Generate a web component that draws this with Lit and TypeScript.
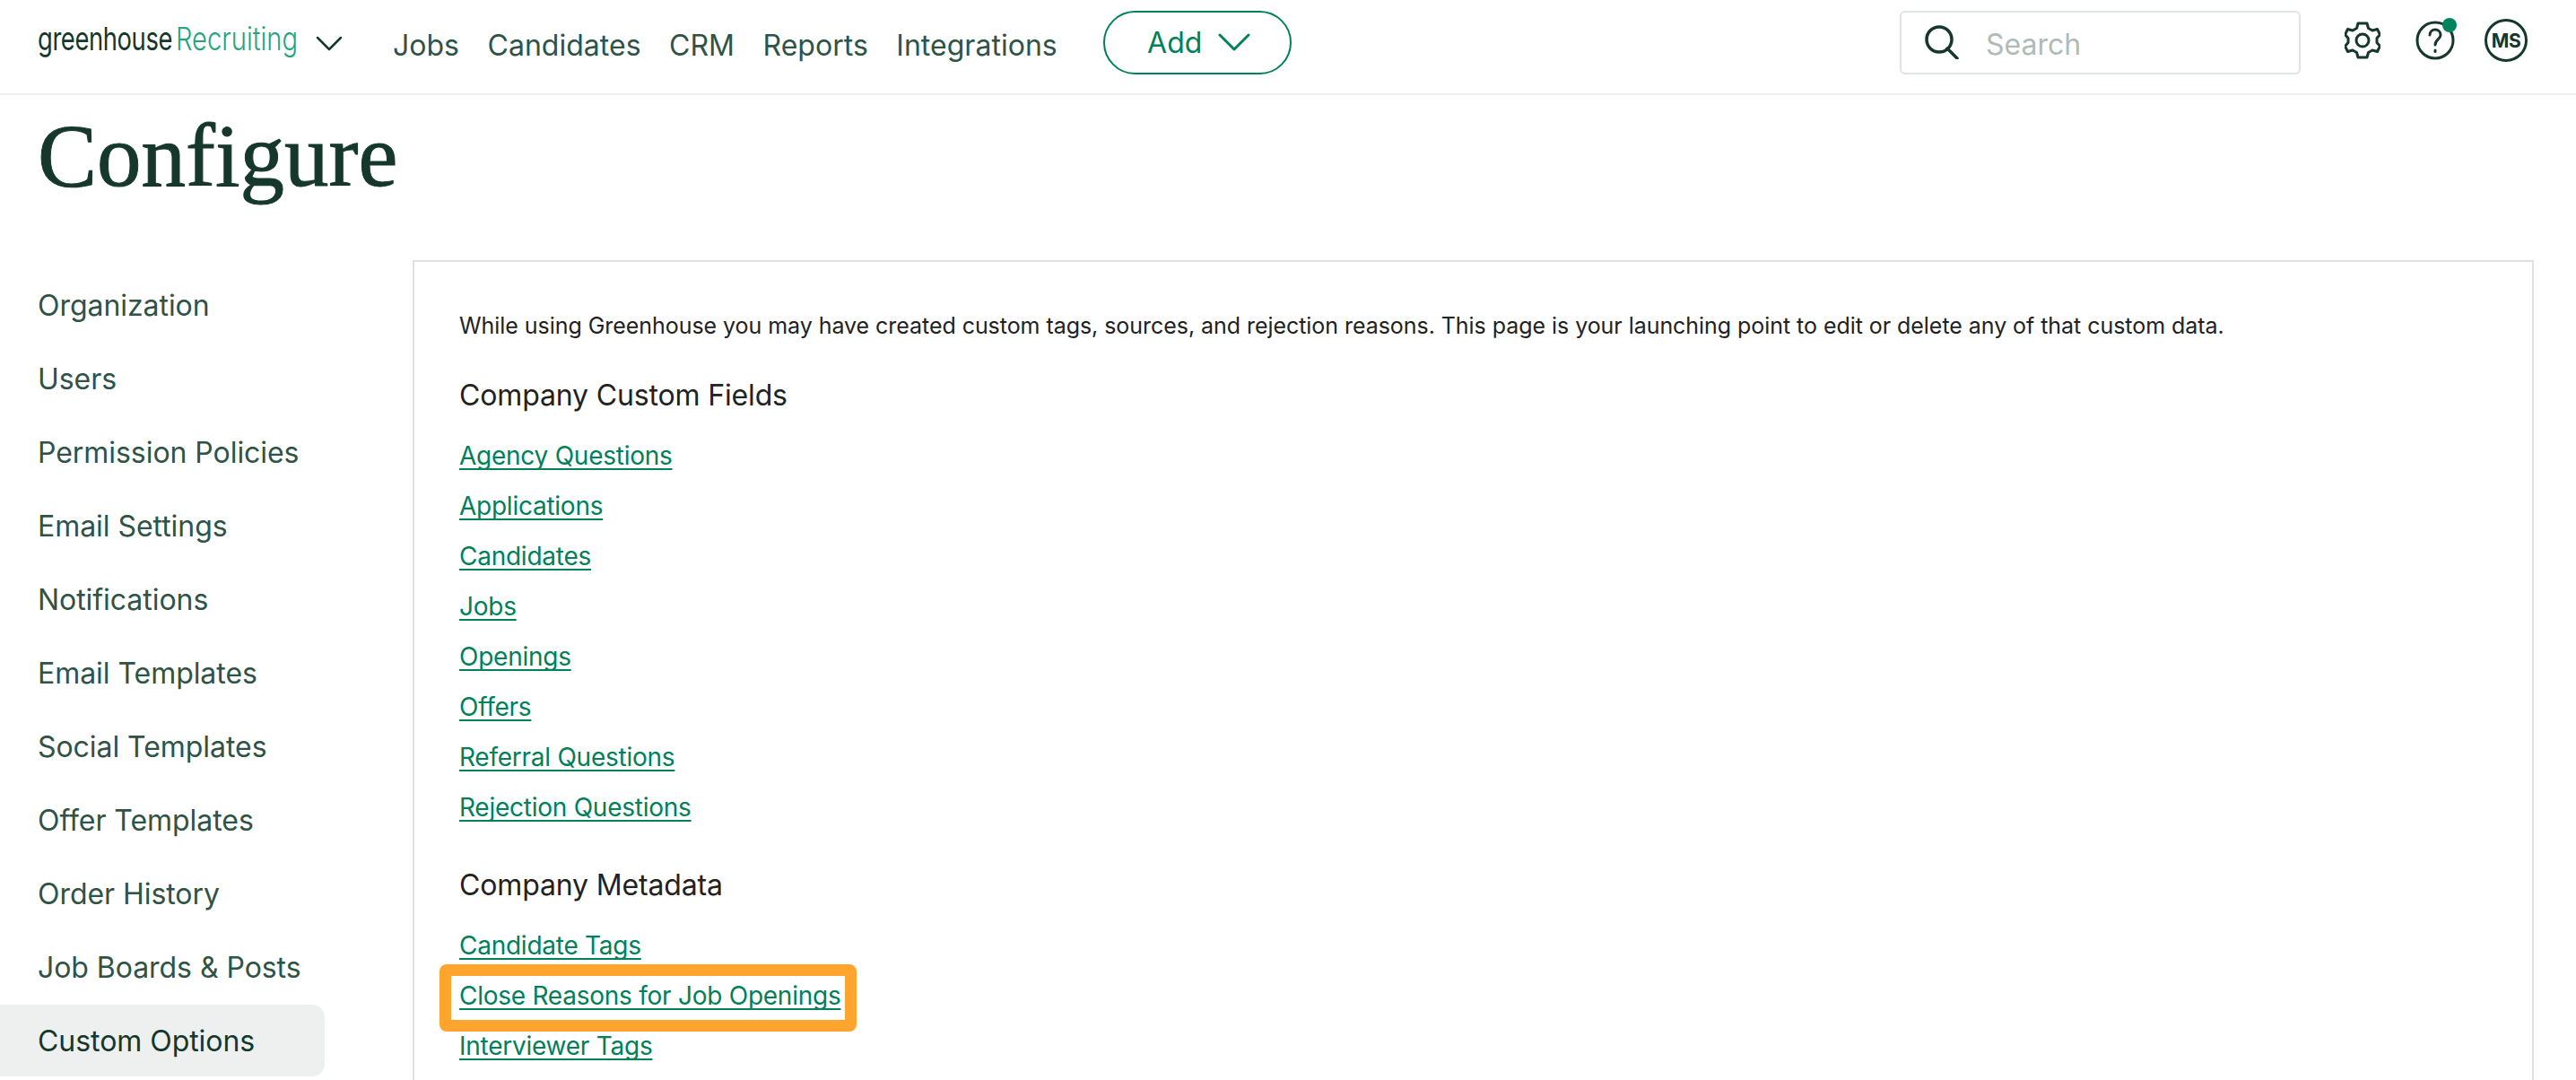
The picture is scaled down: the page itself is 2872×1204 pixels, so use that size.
import { LitElement, html, css } from "lit";
import { customElement } from "lit/decorators.js";

const side = ["Organization","Users","Permission Policies","Email Settings","Notifications","Email Templates","Social Templates","Offer Templates","Order History","Job Boards & Posts","Custom Options"];
const fields = ["Agency Questions","Applications","Candidates","Jobs","Openings","Offers","Referral Questions","Rejection Questions"];
const meta = ["Candidate Tags","Close Reasons for Job Openings","Interviewer Tags"];

@customElement("app-root")
export class AppRoot extends LitElement {
  static styles = css`
    :host { display:block; height:1204px; overflow:hidden; background:#fff; font-family:Inter,"Liberation Sans",sans-serif; }
    * { box-sizing:border-box; }
    header { height:106px; border-bottom:2px solid #eff0f0; display:flex; align-items:center; padding:0 54px 0 42px; }
    .logo { width:310px; height:104px; display:flex; align-items:center; gap:0; position:relative; }
    .lg { font-size:36px; line-height:40px; transform-origin:left center; margin-top:-18px; white-space:nowrap; }
    .g1 { color:#15372c; width:154px; font-weight:400; letter-spacing:-.5px; transform:scaleX(.76); }
    .g2 { color:#24a47f; font-weight:300; transform:scaleX(.81); }
    .chev { display:block; flex:none; }
    .logo .chev { position:absolute; left:310px; top:40px; }
    nav { display:flex; gap:31.500px; margin-left:86px; margin-top:-4px; font-size:32px; letter-spacing:.02px; color:#2f5347; }
    nav span { white-space:nowrap; }
    .add { margin-left:51px; width:210px; height:71px; border:2px solid #00805b; border-radius:36px; display:flex; align-items:center; justify-content:center; gap:18px; color:#00805b; font-size:32px; font-weight:400; padding-left:4px; margin-top:-10px; }
    .search { margin-left:auto; width:447px; height:71px; border:2px solid #dfe4e3; border-radius:6px; display:flex; align-items:center; padding-left:26px; gap:30px; color:#aebcb8; font-size:32px; margin-top:-10px; }
    .search span { margin-top:4px; }
    .icons { display:flex; align-items:center; margin-left:49px; gap:36px; margin-top:-14px; }
    .help { position:relative; width:44px; height:44px; margin-left:3px; margin-right:-3px; }
    .dot { position:absolute; left:30px; top:-3px; width:16px; height:16px; border-radius:50%; background:#00845f; }
    .ms { width:48px; height:48px; border:3px solid #15372c; border-radius:50%; display:flex; align-items:center; justify-content:center; font-size:21px; font-weight:700; color:#15372c; letter-spacing:-.5px; }
    h1 { margin:0; padding:0 0 0 42px; height:184px; font:400 99px/135px "Liberation Serif",serif; color:#15372c; -webkit-text-stroke:1px #15372c; }
    main { display:grid; grid-template-columns:460px 2365px; }
    aside { padding-top:10px; }
    .si { width:362px; height:80px; margin-bottom:2px; padding-left:42px; display:flex; align-items:center; font-size:32px; letter-spacing:-.05px; color:#2f5347; }
    .si.on { background:#eef0ef; color:#15372c; border-radius:0 14px 14px 0; }
    .panel { border:2px solid #e0e0e0; padding:52px 50px 0; height:1000px; color:#222; }
    p { margin:0; font-size:25px; letter-spacing:-.05px; line-height:38px; }
    h2 { margin:39px 0 0; font-size:32px; letter-spacing:-.15px; line-height:40px; font-weight:400; }
    ul { list-style:none; margin:19px 0 0; padding:0; }
    li { height:56px; display:flex; align-items:center; font-size:28px; letter-spacing:-.25px; }
    a { color:#00805b; text-decoration:underline; text-decoration-thickness:2px; text-underline-offset:4px; text-decoration-skip-ink:none; }
    .hl { position:relative; }
    .hl::before { content:""; position:absolute; left:-22px; top:-7px; width:439px; height:49px; border:13px solid #ffa52e; border-radius:8px; }
    h2.second { margin-top:39px; }
  `;
  render() {
    const chev = (w:number,h:number,c:string,sw:number)=>html`<svg class="chev" width=${w} height=${h} viewBox="0 0 ${w} ${h}" fill="none" stroke=${c} stroke-width=${sw} stroke-linecap="round" stroke-linejoin="round"><path d="M2 2L${w/2} ${h-2}L${w-2} 2"/></svg>`;
    return html`
      <header>
        <div class="logo"><span class="lg g1">greenhouse</span><span class="lg g2">Recruiting</span>${chev(30,17,"#15372c",2.5)}</div>
        <nav><span>Jobs</span><span>Candidates</span><span>CRM</span><span>Reports</span><span>Integrations</span></nav>
        <div class="add"><span>Add</span>${chev(36,20,"#00805b",3)}</div>
        <div class="search">
          <svg width="38" height="38" viewBox="0 0 38 38" fill="none" stroke="#15372c" stroke-width="3.5" stroke-linecap="round"><circle cx="16" cy="16" r="14"/><path d="M25 26L36 37"/></svg>
          <span>Search</span>
        </div>
        <div class="icons">
          <svg width="40" height="42" viewBox="0 0 40 42" fill="none" stroke="#15372c" stroke-width="3" stroke-linejoin="round"><path d="M15 2h10l1.500 5.500 4.500 2.500 5.500-1.500 3 6-3.500 4v5l3.500 4-3 6-5.500-1.500-4.500 2.500L25 40H15l-1.500-5.500L9 32l-5.500 1.500-3-6L4 23.500v-5L.5 14.500l3-6L9 10l4.500-2.500z"/><circle cx="20" cy="21" r="7"/></svg>
          <div class="help">
            <svg width="44" height="44" viewBox="0 0 44 44" fill="none" stroke="#15372c" stroke-width="3" stroke-linecap="round"><circle cx="22" cy="22" r="20"/><path d="M16 16c0-4 3-6 6-6s6 2 6 6c0 5-6 5-6 11"/><path d="M22 33v1.500"/></svg>
            <span class="dot"></span>
          </div>
          <div class="ms">MS</div>
        </div>
      </header>
      <h1>Configure</h1>
      <main>
        <aside>${side.map(s=>html`<div class="si ${s==="Custom Options"?"on":""}">${s}</div>`)}</aside>
        <section class="panel">
          <p>While using Greenhouse you may have created custom tags, sources, and rejection reasons. This page is your launching point to edit or delete any of that custom data.</p>
          <h2>Company Custom Fields</h2>
          <ul>${fields.map(f=>html`<li><a>${f}</a></li>`)}</ul>
          <h2 class="second">Company Metadata</h2>
          <ul>${meta.map(f=>html`<li class=${f.startsWith("Close")?"hl":""}><a>${f}</a></li>`)}</ul>
        </section>
      </main>`;
  }
}
